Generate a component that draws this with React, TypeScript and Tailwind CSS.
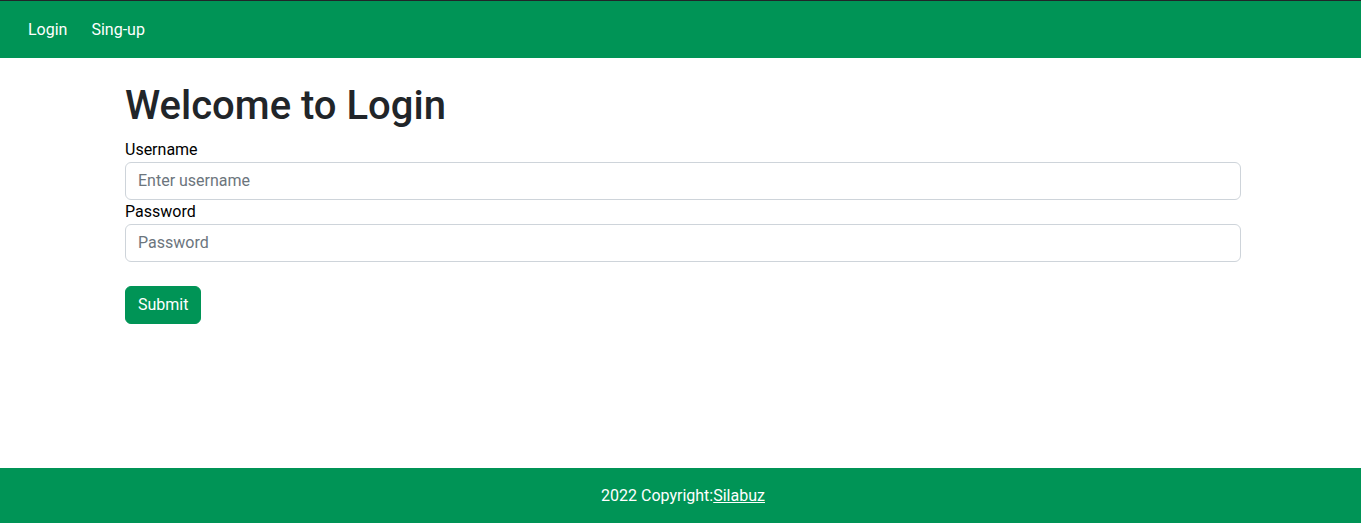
export default function App() {
    const green = "bg-[#009456]"

    return (
        <div className="min-h-screen flex flex-col bg-white font-['Roboto',sans-serif] text-[16px] leading-[24px] text-[#212529]">
            <nav className={`${green} border-t border-[#212529] h-[58px] flex items-center px-[20px]`}>
                <a href="#" className="px-[8px] text-white">Login</a>
                <a href="#" className="px-[8px] ml-[8px] text-white">Sing-up</a>
            </nav>

            <main className="w-[1116px] ml-[125px] pt-[24px]">
                <h1 className="text-[40px] leading-[48px] font-[500] mb-[8px]">Welcome to Login</h1>
                <form className="flex flex-col" onSubmit={(e) => e.preventDefault()}>
                    <label className="text-black">Username</label>
                    <input
                        type="text"
                        placeholder="Enter username"
                        className="w-full rounded-[6px] border border-[#ced4da] px-[12px] py-[6px] leading-[24px] placeholder:text-[#6c757d] outline-none"
                    />
                    <label className="text-black">Password</label>
                    <input
                        type="password"
                        placeholder="Password"
                        className="w-full rounded-[6px] border border-[#ced4da] px-[12px] py-[6px] leading-[24px] placeholder:text-[#6c757d] outline-none"
                    />
                    <div className="mt-[24px]">
                        <button type="submit" className={`${green} border border-[#009456] py-[6px] leading-[24px] px-[12px] rounded-[6px] text-white`}>Submit</button>
                    </div>
                </form>
            </main>

            <footer className={`${green} mt-auto h-[55px] flex items-center justify-center pl-[5px] text-white`}>
                2022 Copyright:<a href="#" className="underline">Silabuz</a>
            </footer>
        </div>
    )
}
